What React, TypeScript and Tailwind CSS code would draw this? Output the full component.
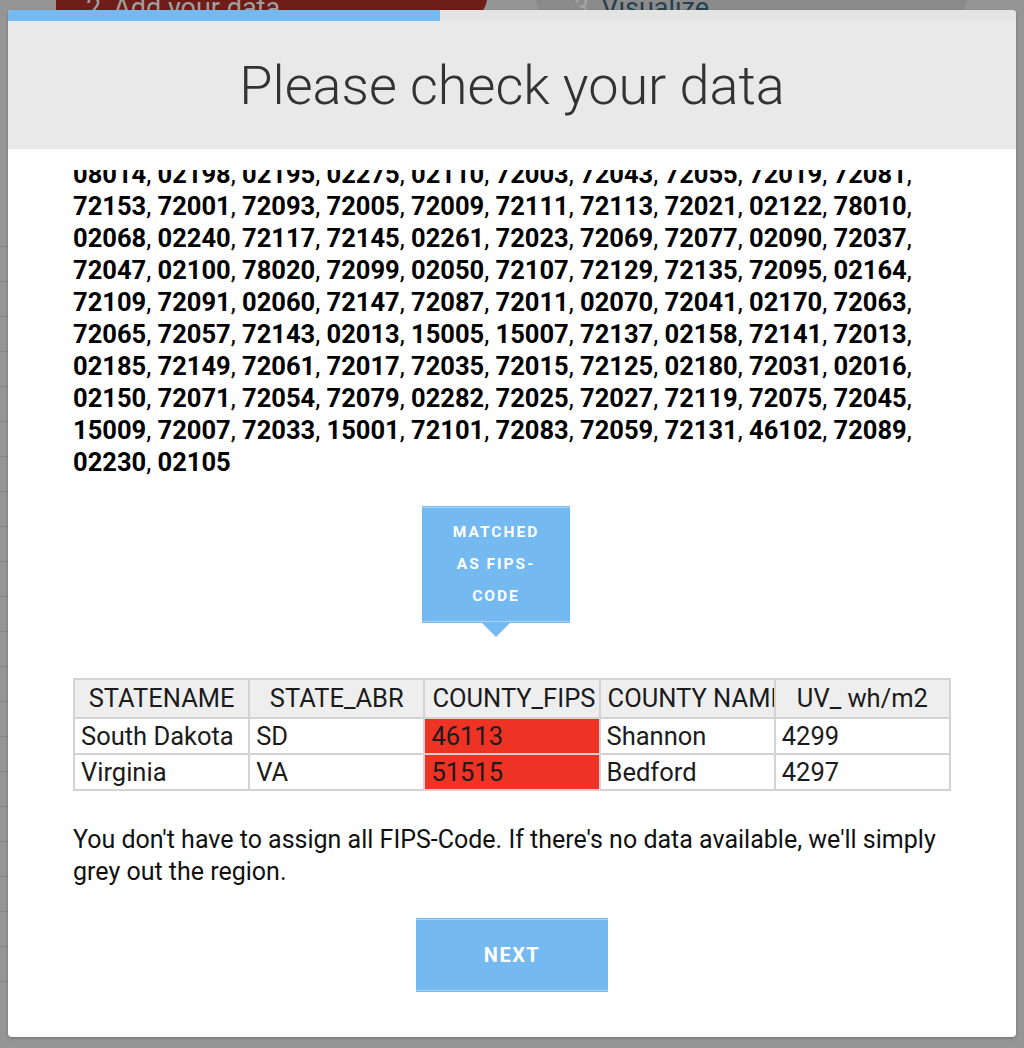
import React from 'react';

const FIPS_LINES: string[][] = [
  ['08014', '02198', '02195', '02275', '02110', '72003', '72043', '72055', '72019', '72081'],
  ['72153', '72001', '72093', '72005', '72009', '72111', '72113', '72021', '02122', '78010'],
  ['02068', '02240', '72117', '72145', '02261', '72023', '72069', '72077', '02090', '72037'],
  ['72047', '02100', '78020', '72099', '02050', '72107', '72129', '72135', '72095', '02164'],
  ['72109', '72091', '02060', '72147', '72087', '72011', '02070', '72041', '02170', '72063'],
  ['72065', '72057', '72143', '02013', '15005', '15007', '72137', '02158', '72141', '72013'],
  ['02185', '72149', '72061', '72017', '72035', '72015', '72125', '02180', '72031', '02016'],
  ['02150', '72071', '72054', '72079', '02282', '72025', '72027', '72119', '72075', '72045'],
  ['15009', '72007', '72033', '15001', '72101', '72083', '72059', '72131', '46102', '72089'],
  ['02230', '02105'],
];

const COLUMNS = ['STATENAME', 'STATE_ABR', 'COUNTY_FIPS', 'COUNTY NAME', 'UV_ wh/m2'];

const ROWS = [
  ['South Dakota', 'SD', '46113', 'Shannon', '4299'],
  ['Virginia', 'VA', '51515', 'Bedford', '4297'],
];

const App: React.FC = () => {
  const total = FIPS_LINES.length;

  return (
    <div className="relative w-full h-[1048px] overflow-hidden bg-[#959595] font-[family-name:Roboto,sans-serif]">
      {/* dimmed page behind the dialog */}
      <div className="flex items-start gap-[49px] pl-[56px] h-[40px]">
        <div className="h-[40px] w-[431px] -mt-[22px] bg-[#6e1d19] rounded-r-[20px] whitespace-nowrap flex items-start gap-[12px] pt-[15px] pl-[30px] text-[27px] leading-[30px] text-[#a0a0a0]">
          <span>2</span>
          <span>Add your data</span>
        </div>
        <div className="h-[40px] w-[431px] -mt-[22px] bg-[#8b8b8b] rounded-[20px] whitespace-nowrap flex items-start gap-[12px] pt-[15px] pl-[38px] text-[27px] leading-[30px] text-[#25404e]">
          <span className="text-[#a3a3a3]">3</span>
          <span>Visualize</span>
        </div>
      </div>
      <div className="flex flex-col w-[8px] mt-[206px] gap-[34px]">
        {Array.from({ length: 22 }).map((_, i) => (
          <div key={i} className="h-px bg-[#868686]" />
        ))}
      </div>

      {/* dialog */}
      <div className="absolute left-[8px] top-[10px] w-[1008px] h-[1027px] bg-white rounded-[4px] overflow-hidden flex flex-col shadow-[0_1px_3px_rgba(0,0,0,0.25)]">
        <div className="h-[11px] bg-[#e4e4e4] flex">
          <div className="w-[432px] bg-[#74b9f0]" />
        </div>
        <div className="h-[128px] bg-[#e9e9e9] flex items-center justify-center">
          <h1 className="text-[54px] font-light text-[#333333]">Please check your data</h1>
        </div>

        <div className="px-[65px] pt-[21px] flex flex-col">
          <div className="overflow-hidden">
            <div className="-mt-[12px] text-[25.5px] leading-[32px] text-black">
              {FIPS_LINES.map((line, li) => (
                <div key={li} className="whitespace-nowrap">
                  {line.map((code, ci) => (
                    <React.Fragment key={code}>
                      <span className="font-bold">{code}</span>
                      {ci < line.length - 1 || li < total - 1 ? ', ' : ''}
                    </React.Fragment>
                  ))}
                </div>
              ))}
            </div>
          </div>

          <div className="relative mt-[28px] ml-[349px] w-[148px] bg-[#74b9f0] pt-[10px] pb-[11px] text-center text-[15.5px] leading-[32px] font-bold tracking-[2px] text-white shadow-[inset_0_1px_0_#74b9f0,inset_0_2px_0_#a9d4f6,inset_0_-1px_0_#74b9f0,inset_0_-2px_0_#a9d4f6]">
            <div>MATCHED</div>
            <div>AS FIPS-</div>
            <div>CODE</div>
            <div className="absolute left-1/2 top-full -translate-x-1/2 w-0 h-0 border-x-[14px] border-x-transparent border-t-[14px] border-t-[#74b9f0]" />
          </div>

          <table className="mt-[55px] w-[878px] table-fixed border-collapse text-[25.5px] text-[#1b1b1b]">
            <thead>
              <tr>
                {COLUMNS.map((c) => (
                  <th
                    key={c}
                    className="relative z-10 h-[39px] px-[7px] py-0 font-normal text-center whitespace-nowrap overflow-hidden border-2 border-[#d3d3d3] bg-[#eeeeee] leading-[35px] shadow-[0_2px_3px_rgba(0,0,0,0.28)]"
                  >
                    {c}
                  </th>
                ))}
              </tr>
            </thead>
            <tbody>
              {ROWS.map((row, ri) => (
                <tr key={ri}>
                  {row.map((cell, ci) => (
                    <td
                      key={ci}
                      className={`h-[36px] px-[6px] py-0 text-left whitespace-nowrap overflow-hidden border-2 border-[#d3d3d3] leading-[32px] ${ci === 2 ? 'bg-[#ee3224]' : 'bg-white'}`}
                    >
                      {cell}
                    </td>
                  ))}
                </tr>
              ))}
            </tbody>
          </table>

          <p className="mt-[33px] text-[25px] leading-[32px] text-[#111111]">
            You don't have to assign all FIPS-Code. If there's no data available, we'll simply grey out the region.
          </p>

          <button className="mt-[30px] mx-auto w-[192px] h-[74px] bg-[#74b9f0] text-white text-[20px] font-bold tracking-[1.5px] shadow-[inset_0_1px_0_#74b9f0,inset_0_2px_0_#a9d4f6,inset_0_-1px_0_#74b9f0,inset_0_-2px_0_#a9d4f6]">
            NEXT
          </button>
        </div>
      </div>
    </div>
  );
};

export default App;
